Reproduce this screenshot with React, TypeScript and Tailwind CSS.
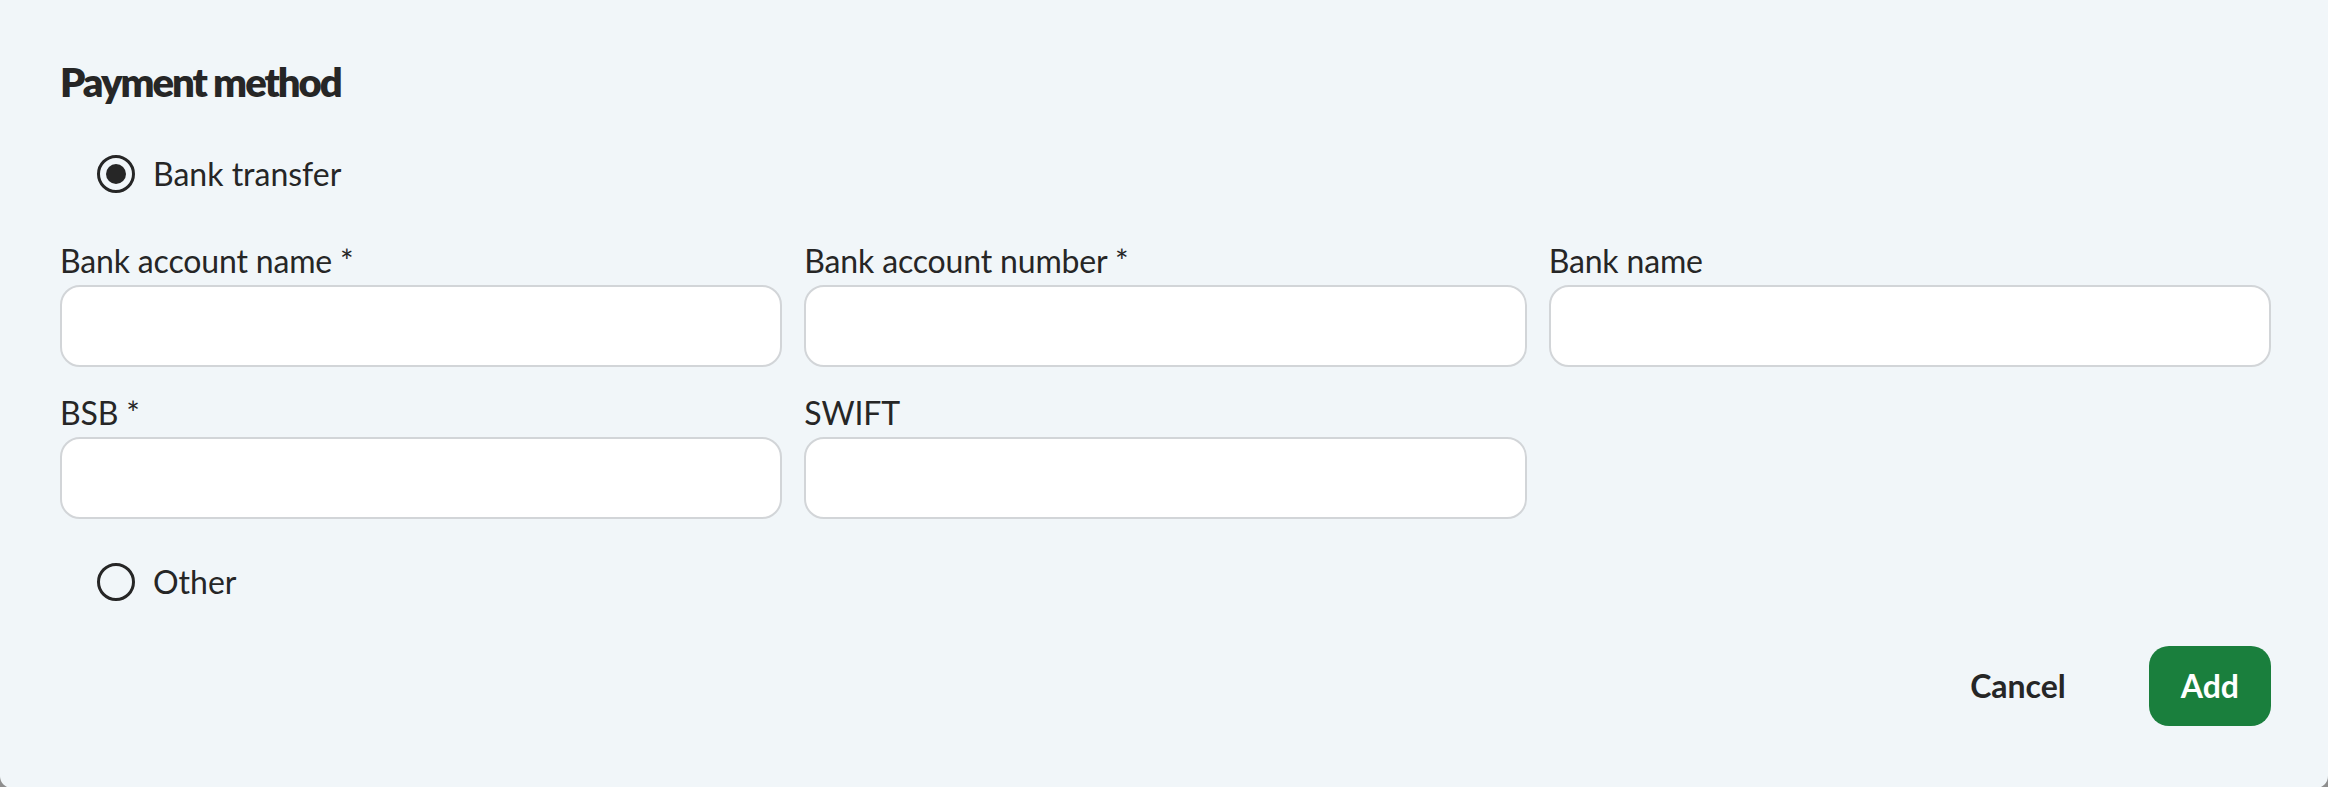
import React from 'react'

function Radio({ label, checked }: { label: string; checked?: boolean }) {
  return (
    <label className="flex items-center gap-[18px] pl-[37px] h-[48px] cursor-pointer">
      <span className="flex items-center justify-center w-[38px] h-[38px] rounded-full border-[3px] border-[#262626]">
        {checked && <span className="w-[20px] h-[20px] rounded-full bg-[#262626]" />}
      </span>
      <span className="text-[32px] leading-[48px] text-[#262626]">{label}</span>
    </label>
  )
}

function Field({ label }: { label: string }) {
  return (
    <div className="flex flex-col">
      <span className="text-[32px] leading-[48px] tracking-[-0.005em] text-[#262626]">{label}</span>
      <input
        type="text"
        className="h-[82px] w-full rounded-[20px] border-2 border-[#d2d5d8] bg-white px-[24px] text-[32px] outline-none"
      />
    </div>
  )
}

export default function App() {
  return (
    <div className="min-h-screen w-full bg-[#8e8e8e] font-['Lato','Open_Sans',sans-serif]">
      <div className="bg-[#f1f6f9] rounded-b-[12px] pl-[60px] pr-[57px] pt-[58px] pb-[62px]">
        <h2 className="text-[40px] leading-[48px] font-extrabold tracking-[-0.05em] text-[#262626]">
          Payment method
        </h2>

        <div className="mt-[44px]">
          <Radio label="Bank transfer" checked />
        </div>

        <div className="mt-[39px] grid grid-cols-3 gap-x-[22px] gap-y-[22px]">
          <Field label="Bank account name *" />
          <Field label="Bank account number *" />
          <Field label="Bank name" />
          <Field label="BSB *" />
          <Field label="SWIFT" />
        </div>

        <div className="mt-[39px]">
          <Radio label="Other" />
        </div>

        <div className="mt-[40px] flex items-center justify-end gap-[51px]">
          <button className="px-[32px] py-[16px] text-[32px] leading-[48px] font-bold text-[#262626]">
            Cancel
          </button>
          <button className="rounded-[20px] bg-[#1a7f3d] px-[32px] py-[16px] text-[32px] leading-[48px] font-bold text-white">
            Add
          </button>
        </div>
      </div>
    </div>
  )
}
